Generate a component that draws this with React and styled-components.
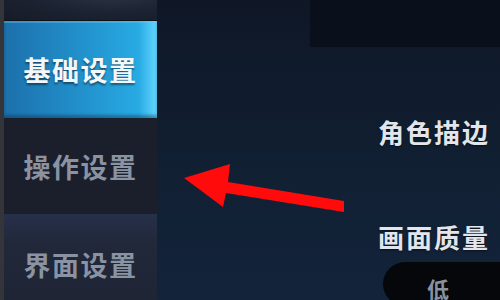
import React from "react";
import styled, { createGlobalStyle } from "styled-components";

const Global = createGlobalStyle`
  html, body {
    margin: 0;
    padding: 0;
    width: 500px;
    height: 300px;
    overflow: hidden;
    background: #0f1828;
  }
  * { box-sizing: border-box; }
`;

const Screen = styled.div`
  position: relative;
  width: 500px;
  height: 300px;
  display: flex;
  overflow: hidden;
  font-family: "Noto Sans CJK SC", "Noto Sans", sans-serif;
`;

const Sidebar = styled.div`
  width: 157px;
  flex-shrink: 0;
  display: flex;
  flex-direction: column;
  overflow: hidden;
  border-left: 4px solid #34353a;
  background: #1a1e29;
`;

const TopStub = styled.div`
  height: 21px;
  flex-shrink: 0;
  background: radial-gradient(ellipse at 70% -40%, #2c3648 0%, #1b2231 55%, #161b26 100%);
  border-bottom: 1px solid #0e1118;
`;

const Tab = styled.div`
  height: ${(p) => p.$h}px;
  flex-shrink: 0;
  display: flex;
  align-items: center;
  justify-content: center;
  font-size: 27px;
  font-weight: 700;
  letter-spacing: 1.5px;
  color: ${(p) => (p.$active ? "#f4f7fa" : "#8a93a3")};
  text-shadow: ${(p) => (p.$active ? "0 2px 2px rgba(0,0,0,0.45)" : "none")};
  background: ${(p) =>
    p.$active
      ? "linear-gradient(90deg, #1c70ab 0%, #218dc8 45%, #28aae3 88%, #62d8ff 100%)"
      : p.$tone === "light"
      ? "linear-gradient(180deg, #27304a 0%, #212839 30%, #1e2434 100%)"
      : "#1b1f2b"};
  box-shadow: ${(p) =>
    p.$active ? "inset 0 2px 0 rgba(120,200,240,0.35), inset 0 -3px 3px rgba(10,40,70,0.4)" : "none"};
`;

const Main = styled.div`
  flex: 1;
  min-width: 0;
  display: flex;
  flex-direction: column;
  background: linear-gradient(180deg, #0f1727 0%, #112033 60%, #13233a 100%);
`;

const TopPanel = styled.div`
  margin-left: 153px;
  height: 47px;
  flex-shrink: 0;
  background: #0a101b;
`;

const Settings = styled.div`
  display: flex;
  flex-direction: column;
  align-items: flex-start;
  padding-left: 221px;
  padding-top: 70px;
`;

const Label = styled.div`
  font-size: 26px;
  font-weight: 700;
  letter-spacing: 2px;
  line-height: 30px;
  white-space: nowrap;
  color: #e2e6ec;
  text-shadow: 0 1px 2px rgba(0,0,0,0.5);
  margin-bottom: ${(p) => p.$gap}px;
`;

const Pill = styled.div`
  margin-left: 5px;
  width: 140px;
  height: 44px;
  flex-shrink: 0;
  border-radius: 22px;
  background: #05070b;
  color: #8a919c;
  font-size: 22px;
  font-weight: 700;
  padding-left: 44px;
  padding-top: 10px;
`;

const Arrow = styled.svg`
  position: absolute;
  left: 0;
  top: 0;
  pointer-events: none;
`;

export default function App() {
  return (
    <Screen>
      <Global />
      <Sidebar>
        <TopStub />
        <Tab $active $h={97}>基础设置</Tab>
        <Tab $h={96}>操作设置</Tab>
        <Tab $tone="light" $h={100}>界面设置</Tab>
      </Sidebar>
      <Main>
        <TopPanel />
        <Settings>
          <Label $gap={75}>角色描边</Label>
          <Label $gap={10}>画面质量</Label>
          <Pill>低</Pill>
        </Settings>
      </Main>
      <Arrow width="500" height="300" viewBox="0 0 500 300">
        <polygon
          points="184,178 230,164 228,182 344,201 344,212 226,193 223,207"
          fill="#ff0b0b"
        />
      </Arrow>
    </Screen>
  );
}
